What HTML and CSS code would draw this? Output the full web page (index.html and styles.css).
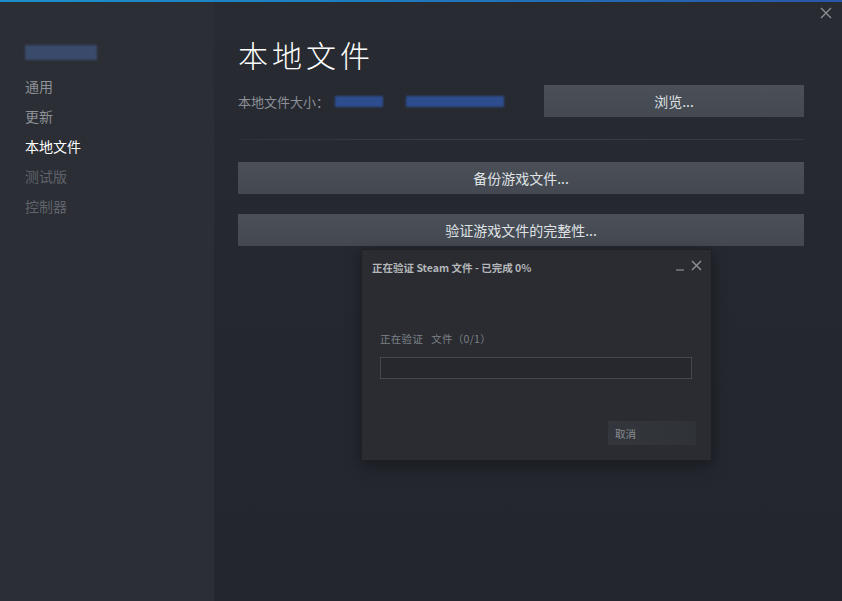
FILE: index.html
```html
<!DOCTYPE html>
<html lang="zh-CN">
<head>
<meta charset="utf-8">
<title>本地文件</title>
<link rel="stylesheet" href="styles.css">
</head>
<body>
<div class="app">
  <div class="topline"></div>
  <div class="window">
    <aside class="sidebar">
      <div class="game-name"></div>
      <nav class="nav">
        <div class="nav-item">通用</div>
        <div class="nav-item">更新</div>
        <div class="nav-item active">本地文件</div>
        <div class="nav-item dim">测试版</div>
        <div class="nav-item dim">控制器</div>
      </nav>
    </aside>
    <main class="content">
      <h1 class="title">本地文件</h1>
      <div class="size-row">
        <div class="size-label">本地文件大小：<span class="blur b1"></span><span class="blur b2"></span></div>
        <button class="btn browse">浏览...</button>
      </div>
      <div class="sep"></div>
      <button class="btn wide">备份游戏文件...</button>
      <button class="btn wide second">验证游戏文件的完整性...</button>
    </main>
    <div class="close">
      <svg width="12" height="12" viewBox="0 0 12 12"><path d="M1 1L11 11M11 1L1 11" stroke="#8a8d92" stroke-width="1.4" fill="none"/></svg>
    </div>
    <div class="dialog">
      <div class="dlg-head">
        <span class="dlg-title">正在验证 Steam 文件 - 已完成 0%</span>
        <span class="dlg-ctrls">
          <svg width="9" height="9" viewBox="0 0 9 9"><path d="M0 8H8" stroke="#7d8086" stroke-width="1.4"/></svg>
          <svg width="11" height="11" viewBox="0 0 11 11"><path d="M1 1L10 10M10 1L1 10" stroke="#8a8d92" stroke-width="1.5" fill="none"/></svg>
        </span>
      </div>
      <div class="dlg-body">
        <div class="dlg-label">正在验证&nbsp;&nbsp;&nbsp;文件（0/1）</div>
        <div class="progress"></div>
        <div class="dlg-foot">
          <button class="cancel">取消</button>
        </div>
      </div>
    </div>
  </div>
</div>
</body>
</html>
```
FILE: styles.css
```css
* { box-sizing: border-box; }
html, body {
  margin: 0;
  padding: 0;
  width: 842px;
  height: 601px;
  overflow: hidden;
  background: #24272f;
  font-family: "Noto Sans CJK SC", "Noto Sans", "Liberation Sans", sans-serif;
}
.app {
  width: 842px;
  height: 601px;
  display: flex;
  flex-direction: column;
}
.topline {
  height: 2px;
  background: linear-gradient(90deg, #1b8fc9 0%, #1d7fbf 40%, #2a56a8 100%);
}
.window {
  position: relative;
  flex: 1;
  display: flex;
}
.sidebar {
  width: 214px;
  background: #2b2e34;
  padding-top: 43px;
  padding-left: 25px;
}
.game-name {
  width: 72px;
  height: 15px;
  background: #3a4a6b;
  filter: blur(1px);
}
.nav {
  margin-top: 11px;
  display: flex;
  flex-direction: column;
}
.nav-item {
  height: 30px;
  line-height: 30px;
  font-size: 14px;
  color: #8d9198;
}
.nav-item.active { color: #ffffff; }
.nav-item.dim { color: #5f636b; }
.content {
  flex: 1;
  padding: 34px 38px 0 24px;
  background: linear-gradient(180deg, #282b32 0%, #25282f 40%, #23262e 100%);
  display: flex;
  flex-direction: column;
}
.title {
  margin: 0;
  font-size: 30px;
  line-height: 36px;
  font-weight: 300;
  letter-spacing: 4px;
  color: #ffffff;
}
.size-row {
  margin-top: 13px;
  display: flex;
  align-items: center;
  justify-content: space-between;
}
.size-label {
  font-size: 13px;
  color: #8b9099;
  display: flex;
  align-items: center;
}
.blur {
  display: inline-block;
  height: 11px;
  background: #2d4d8f;
  filter: blur(0.8px);
}
.b1 { width: 48px; margin-left: 6px; }
.b2 { width: 98px; margin-left: 23px; }
.btn {
  height: 32px;
  border: none;
  background: linear-gradient(180deg, #4a4f58 0%, #434851 100%);
  color: #dfe1e3;
  font-family: inherit;
  font-size: 14px;
  padding: 0;
}
.browse { width: 260px; }
.sep {
  margin-top: 22px;
  height: 1px;
  background: linear-gradient(90deg, rgba(60,64,72,0.3) 0%, #3b3f47 40%, #34373e 100%);
}
.wide {
  margin-top: 22px;
  width: 100%;
}
.wide.second { margin-top: 20px; }
.close {
  position: absolute;
  right: 10px;
  top: 5px;
  width: 12px;
  height: 12px;
  display: flex;
}
.dialog {
  position: absolute;
  left: 361px;
  top: 247px;
  width: 351px;
  height: 212px;
  background: #2a2c31;
  border: 1px solid #1e2024;
  box-shadow: 0 4px 14px rgba(0,0,0,0.35);
  display: flex;
  flex-direction: column;
}
.dlg-head {
  height: 34px;
  padding: 0 9px 0 10px;
  display: flex;
  align-items: center;
  justify-content: space-between;
}
.dlg-title {
  font-size: 10.5px;
  font-weight: 700;
  color: #b4b6ba;
}
.dlg-ctrls {
  display: flex;
  align-items: flex-end;
  gap: 6px;
  margin-top: -4px;
}
.dlg-body {
  flex: 1;
  padding: 47px 19px 0 18px;
  display: flex;
  flex-direction: column;
}
.dlg-label {
  font-size: 10.5px;
  color: #7d8086;
  line-height: 16px;
  letter-spacing: 0.3px;
}
.progress {
  margin-top: 10px;
  height: 22px;
  border: 1px solid #45484e;
  background: #26282d;
}
.dlg-foot {
  margin-top: 42px;
  display: flex;
  justify-content: flex-end;
}
.cancel {
  width: 88px;
  height: 24px;
  margin-right: -4px;
  border: none;
  background: linear-gradient(90deg, #33363c 0%, #2f3237 100%);
  color: #8a8d93;
  font-family: inherit;
  font-size: 10.5px;
  text-align: left;
  padding: 0 0 0 7px;
}
```
